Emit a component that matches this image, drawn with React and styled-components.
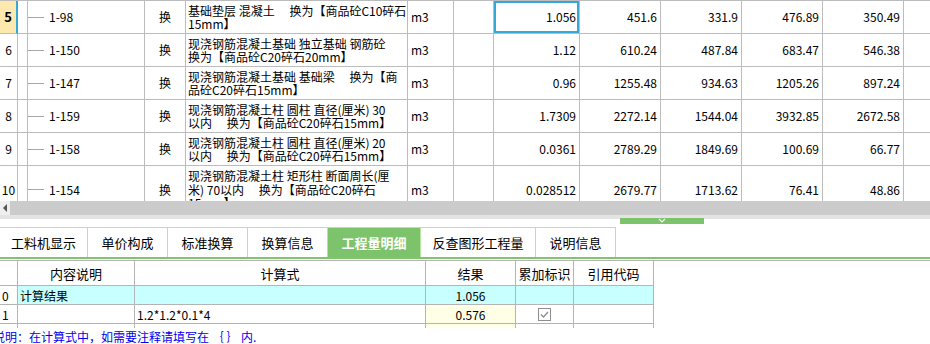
import React from "react";
import styled, { createGlobalStyle } from "styled-components";

const GlobalStyle = createGlobalStyle`
  html, body {
    margin: 0;
    padding: 0;
    background: #ffffff;
  }
  body {
    font-family: "Noto Sans CJK SC", "Noto Sans", sans-serif;
    font-size: 12px;
    color: #000;
  }
`;

const Page = styled.div`
  width: 930px;
  height: 344px;
  overflow: hidden;
  display: flex;
  flex-direction: column;
  background: #fff;
`;

const TopGrid = styled.div`
  height: 202px;
  overflow: hidden;
  border-top: 1px solid #bcbcbc;
  box-sizing: border-box;
`;

const Row = styled.div`
  display: grid;
  grid-template-columns: 18px 10px 117px 41px 222px 46px 40px 86px 81px 81px 81px 81px 1fr;
  height: ${(p) => p.$h}px;
`;

const Cell = styled.div`
  box-sizing: border-box;
  border-right: 1px solid #bcbcbc;
  border-bottom: 1px solid #bcbcbc;
  display: flex;
  align-items: center;
  justify-content: ${(p) => p.$align || "flex-start"};
  padding: 0 3px;
  line-height: 14px;
  white-space: nowrap;
  overflow: hidden;
  position: relative;
`;

const NumCell = styled(Cell)`
  padding: 0;
  justify-content: center;
`;

const SelNum = styled(Cell)`
  background: #fde9ae;
  border-right: 2px solid #37a6d9;
  font-weight: bold;
  font-size: 13px;
  justify-content: center;
  padding: 0;
`;

const CodeCell = styled(Cell)`
  padding-left: 0;
  gap: 5px;
`;

const TreeLine = styled.span`
  display: inline-block;
  width: 16px;
  height: 1px;
  background: #a8a8a8;
`;

const DescCell = styled(Cell)`
  flex-direction: column;
  align-items: flex-start;
  justify-content: center;
  padding: 0 2px;
  line-height: 13.5px;
`;

const Selected = styled.div`
  position: absolute;
  inset: 0 0 0 0;
  border: 2px solid #37a6d9;
`;

const HScroll = styled.div`
  height: 14px;
  background: #cbcbcb;
  display: flex;
  align-items: center;
`;

const ScrollArrow = styled.div`
  width: 10px;
  height: 14px;
  background: #efefef;
  display: flex;
  align-items: center;
  justify-content: center;
`;

const Splitter = styled.div`
  height: 4px;
  background: #e4e4e4;
  position: relative;
`;

const Handle = styled.div`
  position: absolute;
  left: 620px;
  top: 3px;
  width: 84px;
  height: 6px;
  background: #7dc36b;
  display: flex;
  justify-content: center;
`;

const TabBar = styled.div`
  margin-top: 8px;
  display: flex;
  border-bottom: 2px solid #80c46e;
`;

const Tab = styled.div`
  width: ${(p) => p.$w}px;
  height: 30px;
  box-sizing: border-box;
  border-top: 1px solid #b6e5a0;
  border-right: 1px solid #b6e5a0;
  display: flex;
  align-items: center;
  justify-content: center;
  font-size: 13px;
  background: ${(p) => (p.$active ? "#7dc36b" : "#fff")};
  color: ${(p) => (p.$active ? "#fff" : "#000")};
  font-weight: ${(p) => (p.$active ? "bold" : "normal")};
`;

const Detail = styled.div`
  margin-top: 1px;
  height: 67px;
  overflow: hidden;
  border-top: 1px solid #b4b4b4;
`;

const DRow = styled.div`
  display: grid;
  grid-template-columns: 18px 117px 291px 90px 58px 80px;
  height: ${(p) => p.$h}px;
`;

const DCell = styled.div`
  box-sizing: border-box;
  border-right: 1px solid #b4b4b4;
  border-bottom: 1px solid #b4b4b4;
  background: ${(p) => p.$bg || "#fff"};
  display: flex;
  align-items: center;
  justify-content: ${(p) => p.$align || "flex-start"};
  padding: 0 2px;
  white-space: nowrap;
  font-size: ${(p) => (p.$head ? "13px" : "12px")};
`;

const Note = styled.div`
  margin-left: -7px;
  margin-top: 2px;
  color: #0000ee;
  font-size: 12px;
  line-height: 14px;
  white-space: nowrap;
`;

const rows = [
  { n: "5", code: "1-98", desc: ["基础垫层 混凝土　 换为【商品砼C10碎石", "15mm】"], q: "1.056", v: ["451.6", "331.9", "476.89", "350.49"], sel: true, h: 33 },
  { n: "6", code: "1-150", desc: ["现浇钢筋混凝土基础 独立基础 钢筋砼", "换为【商品砼C20碎石20mm】"], q: "1.12", v: ["610.24", "487.84", "683.47", "546.38"], h: 33 },
  { n: "7", code: "1-147", desc: ["现浇钢筋混凝土基础 基础梁　 换为【商", "品砼C20碎石15mm】"], q: "0.96", v: ["1255.48", "934.63", "1205.26", "897.24"], h: 33 },
  { n: "8", code: "1-159", desc: ["现浇钢筋混凝土柱 圆柱 直径(厘米) 30", "以内　 换为【商品砼C20碎石15mm】"], q: "1.7309", v: ["2272.14", "1544.04", "3932.85", "2672.58"], h: 33 },
  { n: "9", code: "1-158", desc: ["现浇钢筋混凝土柱 圆柱 直径(厘米) 20", "以内　 换为【商品砼C20碎石15mm】"], q: "0.0361", v: ["2789.29", "1849.69", "100.69", "66.77"], h: 33 },
  { n: "10", code: "1-154", desc: ["现浇钢筋混凝土柱 矩形柱 断面周长(厘", "米) 70以内　 换为【商品砼C20碎石", "15mm】"], q: "0.028512", v: ["2679.77", "1713.62", "76.41", "48.86"], h: 48 },
];

const tabs = [
  { label: "工料机显示", w: 88 },
  { label: "单价构成", w: 80 },
  { label: "标准换算", w: 80 },
  { label: "换算信息", w: 80 },
  { label: "工程量明细", w: 93, active: true },
  { label: "反查图形工程量", w: 115 },
  { label: "说明信息", w: 80 },
];

const Check = () => (
  <svg width="13" height="13" viewBox="0 0 13 13">
    <rect x="0.5" y="0.5" width="12" height="12" fill="#fff" stroke="#8e8e8e" />
    <path d="M3 6.5 L5.5 9 L10 4" fill="none" stroke="#8a8fa0" strokeWidth="1.4" />
  </svg>
);

export default function App() {
  return (
    <Page>
      <GlobalStyle />
      <TopGrid>
        {rows.map((r) => (
          <Row key={r.n} $h={r.h}>
            {r.sel ? <SelNum>{r.n}</SelNum> : <NumCell>{r.n}</NumCell>}
            <Cell />
            <CodeCell>
              <TreeLine />
              {r.code}
            </CodeCell>
            <Cell $align="center">换</Cell>
            <DescCell>
              {r.desc.map((l, i) => (
                <span key={i}>{l}</span>
              ))}
            </DescCell>
            <Cell>m3</Cell>
            <Cell />
            <Cell $align="flex-end">
              {r.q}
              {r.sel && <Selected />}
            </Cell>
            {r.v.map((x, i) => (
              <Cell key={i} $align="flex-end">
                {x}
              </Cell>
            ))}
            <Cell style={{ borderRight: "none" }} />
          </Row>
        ))}
      </TopGrid>
      <HScroll>
        <ScrollArrow>
          <svg width="5" height="8" viewBox="0 0 5 8">
            <path d="M4 0 L0 4 L4 8 Z" fill="#555" />
          </svg>
        </ScrollArrow>
      </HScroll>
      <Splitter>
        <Handle>
          <svg width="10" height="6" viewBox="0 0 10 6">
            <path d="M2 1 L5 4 L8 1" fill="none" stroke="#fff" strokeWidth="1.2" />
          </svg>
        </Handle>
      </Splitter>
      <TabBar>
        {tabs.map((t) => (
          <Tab key={t.label} $w={t.w} $active={t.active}>
            {t.label}
          </Tab>
        ))}
      </TabBar>
      <Detail>
        <DRow $h={25}>
          <DCell />
          <DCell $head $align="center">内容说明</DCell>
          <DCell $head $align="center">计算式</DCell>
          <DCell $head $align="center">结果</DCell>
          <DCell $head $align="center">累加标识</DCell>
          <DCell $head $align="center">引用代码</DCell>
        </DRow>
        <DRow $h={19}>
          <DCell>0</DCell>
          <DCell $bg="#c8ffff">计算结果</DCell>
          <DCell $bg="#c8ffff" />
          <DCell $bg="#c8ffff" $align="center">1.056</DCell>
          <DCell $bg="#c8ffff" />
          <DCell $bg="#c8ffff" />
        </DRow>
        <DRow $h={19}>
          <DCell>1</DCell>
          <DCell />
          <DCell>1.2*1.2*0.1*4</DCell>
          <DCell $bg="#ffffe6" $align="center">0.576</DCell>
          <DCell $align="center">
            <Check />
          </DCell>
          <DCell />
        </DRow>
        <DRow $h={19}>
          <DCell />
          <DCell />
          <DCell />
          <DCell $bg="#ffffe6" />
          <DCell />
          <DCell />
        </DRow>
      </Detail>
      <Note>说明：在计算式中，如需要注释请填写在 ｛ ｝ 内.</Note>
    </Page>
  );
}
